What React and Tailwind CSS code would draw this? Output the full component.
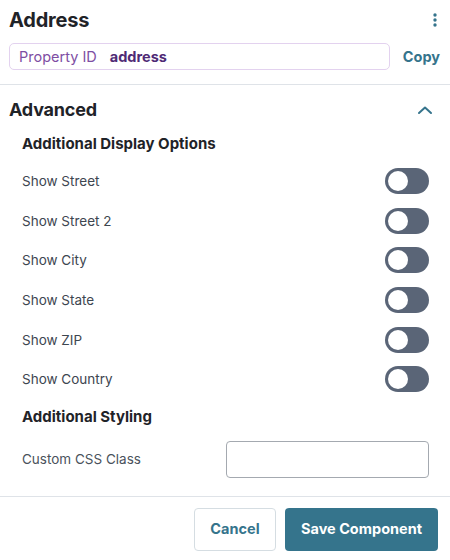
export default function App() {
  const toggles = ['Show Street', 'Show Street 2', 'Show City', 'Show State', 'Show ZIP', 'Show Country']

  return (
    <div className="w-[450px] h-[560px] bg-white font-['Inter',sans-serif] text-[#1f2328] overflow-hidden">
      {/* Header */}
      <div className="px-[9px] pt-[7px]">
        <div className="flex items-center justify-between h-[26px]">
          <h1 className="text-[20px] font-bold tracking-[-0.2px]">Address</h1>
          <svg width="6" height="16" viewBox="0 0 6 16" className="mr-[3px] text-[#35748c]">
            <circle cx="3" cy="3" r="1.7" fill="currentColor" />
            <circle cx="3" cy="8" r="1.7" fill="currentColor" />
            <circle cx="3" cy="13" r="1.7" fill="currentColor" />
          </svg>
        </div>
        <div className="flex items-center mt-[10px] gap-[13px] pr-[1px]">
          <div className="flex-1 h-[27px] border border-[#e3d2ef] rounded-[5px] flex items-center px-[9px] text-[14.5px]">
            <span className="text-[#7e4ea3]">Property ID</span>
            <span className="ml-[13px] font-bold text-[#4f2a75]">address</span>
          </div>
          <span className="text-[14.5px] font-bold text-[#35748c]">Copy</span>
        </div>
      </div>

      <div className="mt-[14px] border-t border-[#dfe3e8]" />

      {/* Advanced */}
      <div className="px-[9px] pt-[11px] flex items-center justify-between">
        <h2 className="text-[18px] font-bold tracking-[-0.2px]">Advanced</h2>
        <svg width="16" height="10" viewBox="0 0 16 10" className="mr-[8px] text-[#35748c]">
          <path d="M2 8 L8 2.5 L14 8" fill="none" stroke="currentColor" strokeWidth="2" strokeLinecap="round" strokeLinejoin="round" />
        </svg>
      </div>

      <div className="pl-[22px] pr-[21px]">
        <h3 className="mt-[10px] text-[15px] font-bold">Additional Display Options</h3>
        <div className="mt-[6px] flex flex-col">
          {toggles.map((t) => (
            <div key={t} className="flex items-center justify-between h-[39.6px]">
              <span className="text-[13.5px] text-[#3d4650]">{t}</span>
              <div className="w-[44px] h-[26px] rounded-full bg-[#5a6577] flex items-center px-[3px]">
                <div className="w-[20px] h-[20px] rounded-full bg-white" />
              </div>
            </div>
          ))}
        </div>
        <h3 className="mt-[7px] text-[15px] font-bold">Additional Styling</h3>
        <div className="mt-[12px] flex items-center justify-between">
          <span className="text-[13.5px] text-[#4a525c]">Custom CSS Class</span>
          <input className="w-[203px] h-[37px] border border-[#a4a9b0] rounded-[4px] outline-none px-2" />
        </div>
      </div>

      <div className="mt-[18px] border-t border-[#dfe3e8]" />

      <div className="flex justify-end gap-[9px] pr-[12px] pt-[11px]">
        <button className="w-[82px] h-[43px] border border-[#d5dde2] rounded-[4px] text-[14.5px] font-bold text-[#35748c]">
          Cancel
        </button>
        <button className="w-[153px] h-[43px] rounded-[4px] bg-[#35748c] text-[14.5px] font-bold text-white">
          Save Component
        </button>
      </div>
    </div>
  )
}
